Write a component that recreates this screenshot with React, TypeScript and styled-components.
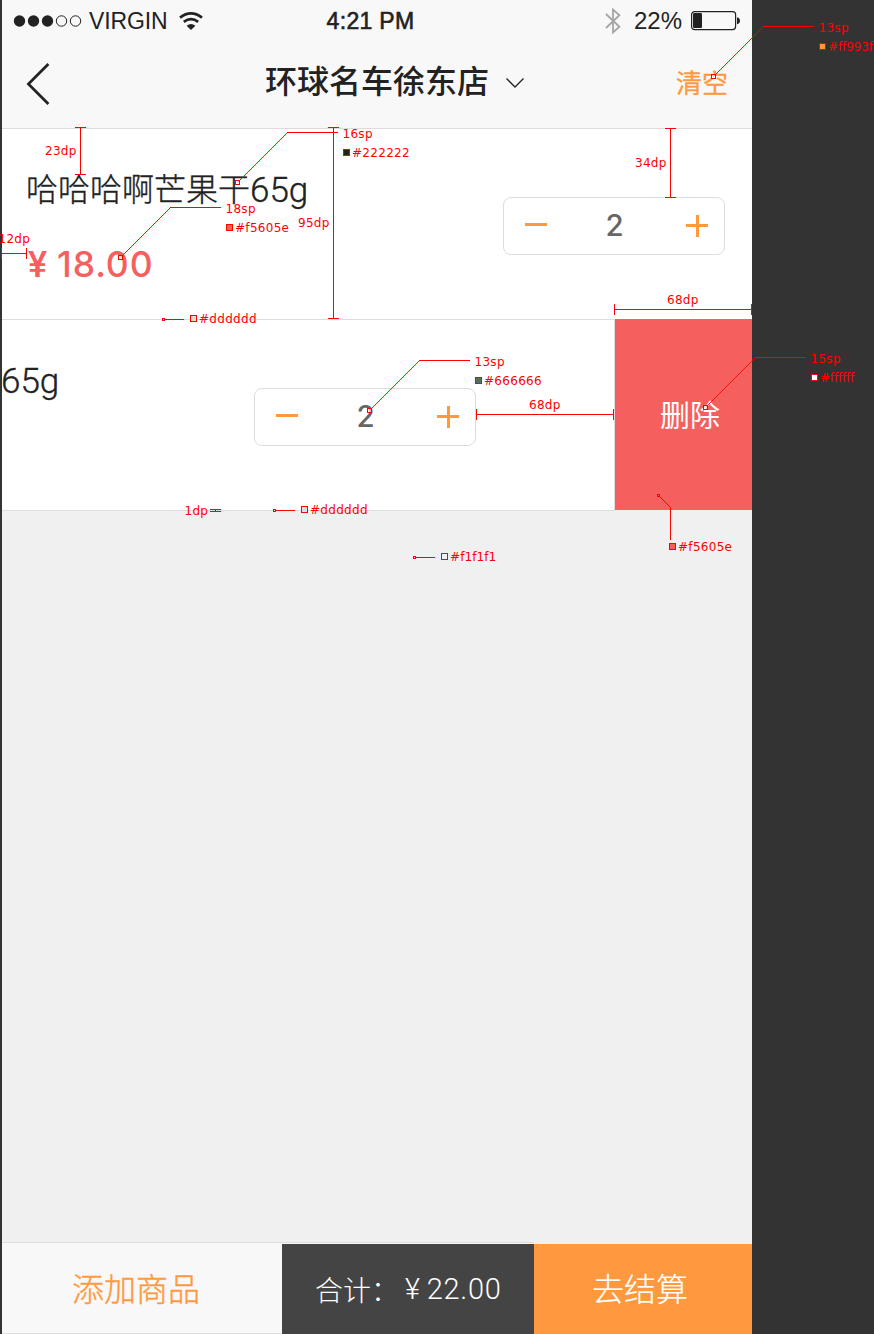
import React from "react";
import styled, { createGlobalStyle } from "styled-components";

const color = {
  ink: "#222222",
  grey: "#666666",
  line: "#dddddd",
  orange: "#ff993f",
  coral: "#f5605e",
  bar: "#f8f8f8",
  page: "#f0f0f0",
  backdrop: "#333333",
  total: "#444444",
  mark: "#ff0000",
};

const cjk = `"Noto Sans CJK SC", "Noto Sans", sans-serif`;
const latin = `Roboto, "Liberation Sans", sans-serif`;
const figures = `Inter, Roboto, sans-serif`;

const GlobalStyle = createGlobalStyle`
  *, *::before, *::after { box-sizing: border-box; }
  body { margin: 0; background: ${color.backdrop}; }
  button { border: 0; background: none; padding: 0; margin: 0; }
`;

const Board = styled.div`
  position: relative;
  width: 874px;
  height: 1334px;
  padding-left: 2px;
  overflow: hidden;
  background: ${color.backdrop};
  font-family: ${cjk};
  color: ${color.ink};
`;

const Phone = styled.main`
  display: flex;
  flex-direction: column;
  width: 750px;
  height: 1334px;
  background: ${color.page};
`;

const Header = styled.header`
  height: 129px;
  background: ${color.bar};
  border-bottom: 1px solid ${color.line};
`;

const StatusBar = styled.div`
  display: grid;
  grid-template-columns: 1fr auto 1fr;
  align-items: center;
  height: 41px;
  padding: 0 11px 0 11px;
  font: 23px/23px "Liberation Sans", Arial, sans-serif;
`;

const StatusGroup = styled.div<{ $end?: boolean }>`
  display: flex;
  align-items: center;
  justify-content: ${(p) => (p.$end ? "flex-end" : "flex-start")};
`;

const Carrier = styled.span`
  margin: 1px 11px 0 6px;
  letter-spacing: -0.1px;
`;

const Clock = styled.span`
  padding: 1px 13px 0 0;
  letter-spacing: 0.3px;
  -webkit-text-stroke: 0.6px ${color.ink};
`;

const Percent = styled.span`
  margin: 0 9px 0 13px;
  font-size: 24px;
`;

const NavBar = styled.nav`
  display: grid;
  grid-template-columns: 1fr auto 1fr;
  align-items: start;
  height: 87px;
  padding: 0 24px 0 24px;
`;

const BackButton = styled.button`
  display: flex;
  justify-self: start;
  margin-top: 21px;
`;

const ShopPicker = styled.button`
  display: flex;
  gap: 16px;
  margin: 22px 0 0 36px;
  font: 500 32px/32px ${cjk};
  color: ${color.ink};

  svg { margin-top: 14px; }
`;

const ClearButton = styled.button`
  justify-self: end;
  margin-top: 28px;
  font: 400 26px/26px ${cjk};
  color: ${color.orange};
  -webkit-text-stroke: 0.3px ${color.orange};
`;

const CartRow = styled.section`
  display: flex;
  height: 191px;
`;

const RowClip = styled.div<{ $swiped?: boolean }>`
  flex: 1;
  overflow: hidden;
  background: #ffffff;
  border-bottom: 1px solid ${color.line};
  border-right: ${(p) => (p.$swiped ? `1px solid ${color.line}` : "0")};
`;

const RowContent = styled.div<{ $shift: number; $end: number }>`
  display: flex;
  justify-content: space-between;
  align-items: flex-start;
  margin-left: ${(p) => -p.$shift}px;
  padding: 42px ${(p) => p.$end}px 0 24px;
`;

const ItemName = styled.div`
  height: 32px;
  font-weight: 300;
  font-size: 32px;
  line-height: 32px;
  white-space: nowrap;
  -webkit-text-stroke: 0.35px ${color.ink};
`;

const Weight = styled.span`
  font: 300 35px/0 ${latin};
  vertical-align: -1px;
`;

const Price = styled.div`
  margin: 44px 0 0 2px;
  font: 500 35.5px/36px ${figures};
  letter-spacing: 0.9px;
  color: ${color.coral};
`;

const PriceYen = styled.span`
  margin-right: 9px;
  font: 500 36px/0 ${latin};
`;

const Stepper = styled.div`
  display: flex;
  align-items: center;
  justify-content: space-between;
  width: 222px;
  height: 58px;
  margin-top: 26px;
  padding: 0 15px 0 20px;
  border: 1px solid ${color.line};
  border-radius: 8px;
`;

const StepButton = styled.button`
  display: flex;
`;

const Count = styled.span`
  padding: 0 4px 2px 0;
  font: 500 29.5px/30px ${figures};
  color: ${color.grey};
`;

const DeleteButton = styled.button`
  width: 137px;
  height: 191px;
  margin-top: -1px;
  padding: 0 0 4px 13px;
  background: ${color.coral};
  color: #ffffff;
  font: 400 30px/30px ${cjk};
`;

const Footer = styled.footer`
  display: flex;
  align-items: flex-end;
  height: 92px;
  margin-top: auto;
`;

const FooterLeft = styled.div`
  display: flex;
  align-items: flex-end;
  width: 532px;
  height: 92px;
  background: ${color.bar};
  border-top: 1px solid ${color.line};
`;

const AddButton = styled.button`
  width: 280px;
  height: 91px;
  padding: 0 12px 3px 0;
  border-bottom: 1px solid ${color.line};
  color: ${color.orange};
  font: 300 32px/32px ${cjk};
  -webkit-text-stroke: 0.4px ${color.orange};
`;

const Total = styled.div`
  display: flex;
  align-items: center;
  width: 252px;
  height: 90px;
  padding: 0 0 1px 33px;
  background: ${color.total};
  color: #ffffff;
  font: 300 28px/28px ${cjk};
  white-space: nowrap;
`;

const Amount = styled.span`
  margin-left: 6px;
  font: 300 29px/28px ${latin};
  letter-spacing: 0.7px;
`;

const TotalYen = styled.span`
  margin-right: 6px;
`;

const Checkout = styled.button`
  width: 218px;
  height: 90px;
  padding: 0 6px 5px 0;
  background: ${color.orange};
  color: #ffffff;
  font: 300 32px/32px ${cjk};
  -webkit-text-stroke: 0.2px #ffffff;
`;

/* Redline layer: measurements and swatches over the screen */

const RedlineSvg = styled.svg`
  position: absolute;
  inset: 0;
`;

const RedlineLabel = styled.span<{ $x: number; $y: number; $track: number }>`
  position: absolute;
  left: ${(p) => p.$x}px;
  top: ${(p) => p.$y - 10}px;
  font: 12px/12px "DejaVu Sans", Verdana, sans-serif;
  letter-spacing: ${(p) => p.$track}px;
  white-space: nowrap;
  color: ${color.mark};
`;

const labels: [string, number, number, number?][] = [
  ["13sp", 818.5, 32],
  ["#ff993f", 828, 51, -0.1],
  ["23dp", 45, 155],
  ["12dp", -1.5, 243],
  ["16sp", 342.5, 138],
  ["#222222", 352, 157],
  ["18sp", 225.5, 213],
  ["#f5605e", 235, 232, 0.3],
  ["95dp", 298, 227],
  ["#dddddd", 199, 323],
  ["34dp", 635, 167],
  ["68dp", 667, 304],
  ["13sp", 474.5, 366],
  ["#666666", 484, 385],
  ["68dp", 529, 409],
  ["15sp", 810.5, 363],
  ["#ffffff", 820, 382, -0.2],
  ["#f5605e", 678, 551, 0.3],
  ["1dp", 184.5, 515],
  ["#dddddd", 310, 514],
  ["#f1f1f1", 450, 561, 0.1],
];

const swatches: [number, number, string][] = [
  [819, 43, color.orange],
  [343, 149, color.ink],
  [226, 224, color.coral],
  [190, 315, color.line],
  [475, 377, color.grey],
  [811, 374, "#ffffff"],
  [669, 543, color.coral],
  [301, 506, color.line],
  [441, 553, "#f1f1f1"],
];

const verticals: [number, number, number][] = [
  [80, 127, 174],
  [333, 127, 318],
  [670, 128, 197],
];

const horizontals: [number, number, number][] = [
  [253, 1, 26],
  [309, 614, 751],
  [414, 476, 613],
];

const leaders: [number, number, number, number, number][] = [
  [713, 76, 763, 26, 814],
  [237, 182, 287, 132, 338],
  [120, 257, 170, 207, 221],
  [369, 410, 419, 360, 470],
  [705, 407, 755, 357, 806],
];

const ticks: [number, number, number][] = [
  [163, 319, 184],
  [274, 510, 295],
  [414, 557, 435],
];

function Redlines() {
  return (
    <>
      <RedlineSvg width="874" height="1334" viewBox="0 0 874 1334" fill="none" stroke={color.mark}>
        {verticals.map(([x, a, b]) => (
          <path key={x} d={`M${x + 0.5} ${a}V${b + 1}M${x - 5} ${a + 0.5}h11M${x - 5} ${b + 0.5}h11`} />
        ))}
        {horizontals.map(([y, a, b]) => (
          <path key={y} d={`M${a} ${y + 0.5}H${b + 1}M${a + 0.5} ${y - 5}v11M${b + 0.5} ${y - 5}v11`} />
        ))}
        {leaders.map(([x, y, bx, by, ex]) => (
          <g key={x}>
            <path d={`M${x + 0.5} ${y + 0.5}L${bx + 0.5} ${by + 0.5}`} strokeWidth="0.9" />
            <path d={`M${bx} ${by + 0.5}H${ex}`} />
            <rect x={x - 1.5} y={y - 1.5} width="4" height="4" fill="#ffffff" fillOpacity="0.6" />
          </g>
        ))}
        {ticks.map(([x, y, e]) => (
          <g key={x}>
            <path d={`M${x + 2} ${y + 0.5}H${e}`} />
            <rect x={x - 0.5} y={y - 0.5} width="2" height="2" />
          </g>
        ))}
        <rect x="657.5" y="494.5" width="2" height="2" />
        <path d="M659.5 496.5L670.5 507.5V540" />
        <path d="M210 509.5h11M210 511.5h11M215.5 509v3" />
        {swatches.map(([x, y, fill]) => (
          <rect key={`${x}-${y}`} x={x + 0.5} y={y + 0.5} width="6" height="6" fill={fill} />
        ))}
      </RedlineSvg>
      {labels.map(([text, x, y, track = 0.3]) => (
        <RedlineLabel key={`${x}-${y}`} $x={x} $y={y} $track={track}>
          {text}
        </RedlineLabel>
      ))}
    </>
  );
}

const SignalDots = () => (
  <svg width="70" height="14" viewBox="0 0 70 14" fill="none" stroke={color.ink}>
    {[6.5, 20.5, 34.5].map((x) => (
      <circle key={x} cx={x} cy="7" r="5.7" fill={color.ink} stroke="none" />
    ))}
    {[48.5, 62.5].map((x) => (
      <circle key={x} cx={x} cy="7" r="5.2" />
    ))}
  </svg>
);

const Wifi = () => (
  <svg width="24" height="18" viewBox="0 0 24 18" fill="none" stroke={color.ink} strokeWidth="2.6">
    <path d="M1 5.6Q12 -2.7 23 5.6" />
    <path d="M4.8 9.9Q12 4.3 19.2 9.9" />
    <path d="M7.6 13.7Q12 10.3 16.4 13.7L12 18Z" fill={color.ink} stroke="none" />
  </svg>
);

const Bluetooth = () => (
  <svg width="16" height="28" viewBox="0 0 16 28" fill="none" stroke="#a5a5a5" strokeWidth="1.8">
    <path d="M1 7L14.4 19.8L8 25.4V2.6L14.4 8.2L1 21" />
  </svg>
);

const Battery = () => (
  <svg width="50" height="20" viewBox="0 0 50 20" fill="none">
    <rect x="0.6" y="0.6" width="44" height="18" rx="3" stroke={color.ink} strokeWidth="1.2" />
    <rect x="2" y="2" width="9" height="15" rx="1.2" fill={color.ink} />
    <path d="M46 6.2Q49 7 49 9.7T46 13.2Z" fill={color.ink} />
  </svg>
);

const QuantityStepper = ({ value }: { value: number }) => (
  <Stepper>
    <StepButton aria-label="minus">
      <svg width="24" height="24" viewBox="0 0 24 24">
        <path d="M1 9h22v3H1z" fill={color.orange} />
      </svg>
    </StepButton>
    <Count>{value}</Count>
    <StepButton aria-label="plus">
      <svg width="24" height="24" viewBox="0 0 24 24">
        <path d="M1 10h10V1h3v9h9v3h-9v10h-3V13H1z" fill={color.orange} />
      </svg>
    </StepButton>
  </Stepper>
);

const Item = ({ shift, end }: { shift: number; end: number }) => (
  <RowContent $shift={shift} $end={end}>
    <div>
      <ItemName>
        哈哈哈啊芒果干<Weight>65g</Weight>
      </ItemName>
      {shift === 0 && (
        <Price>
          <PriceYen>¥</PriceYen>18.00
        </Price>
      )}
    </div>
    <QuantityStepper value={2} />
  </RowContent>
);

export default function App() {
  return (
    <Board>
      <GlobalStyle />
      <Phone>
        <Header>
          <StatusBar>
            <StatusGroup>
              <SignalDots />
              <Carrier>VIRGIN</Carrier>
              <Wifi />
            </StatusGroup>
            <Clock>4:21 PM</Clock>
            <StatusGroup $end>
              <Bluetooth />
              <Percent>22%</Percent>
              <Battery />
            </StatusGroup>
          </StatusBar>
          <NavBar>
            <BackButton aria-label="back">
              <svg width="26" height="44" viewBox="0 0 26 44" fill="none" stroke={color.ink} strokeWidth="2.7">
                <path d="M22.4 2L2.4 22L22.4 42" />
              </svg>
            </BackButton>
            <ShopPicker>
              环球名车徐东店
              <svg width="20" height="12" viewBox="0 0 20 12" fill="none" stroke={color.ink} strokeWidth="1.3">
                <path d="M1.5 1.5L10 10L18.5 1.5" />
              </svg>
            </ShopPicker>
            <ClearButton>清空</ClearButton>
          </NavBar>
        </Header>

        <CartRow>
          <RowClip>
            <Item shift={0} end={27} />
          </RowClip>
        </CartRow>
        <CartRow>
          <RowClip $swiped>
            <Item shift={249} end={138} />
          </RowClip>
          <DeleteButton>删除</DeleteButton>
        </CartRow>

        <Footer>
          <FooterLeft>
            <AddButton>添加商品</AddButton>
            <Total>
              合计：
              <Amount>
                <TotalYen>¥</TotalYen>22.00
              </Amount>
            </Total>
          </FooterLeft>
          <Checkout>去结算</Checkout>
        </Footer>
      </Phone>
      <Redlines />
    </Board>
  );
}
